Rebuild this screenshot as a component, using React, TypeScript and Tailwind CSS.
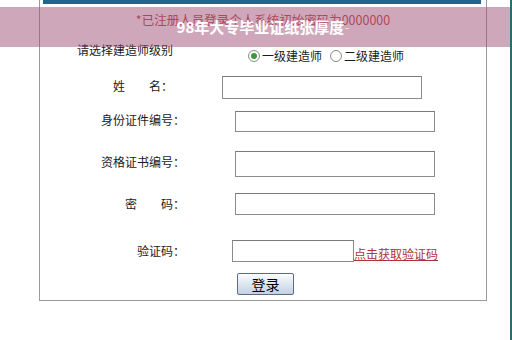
import React from "react";

const font = { fontFamily: '"Noto Sans CJK SC", "Noto Sans", sans-serif' };

function Radio({ checked }: { checked?: boolean }) {
  return (
    <span className="inline-flex items-center justify-center w-[12px] h-[12px] rounded-full border border-[#8a8a8a] bg-white mr-[2px]">
      {checked ? <span className="w-[6px] h-[6px] rounded-full bg-[#3c9a3c]" /> : null}
    </span>
  );
}

function Field({ w, h }: { w: number; h: number }) {
  return (
    <div
      className="border border-[#8c8c8c] border-t-[#7a7a7a] bg-white"
      style={{ width: w, height: h }}
    />
  );
}

export default function App() {
  return (
    <div
      className="relative w-[512px] h-[340px] bg-white overflow-hidden border-r-[2px] border-[#2c6b72] text-[#1a1a1a]"
      style={font}
    >
      <div className="ml-[39px] w-[448px] h-[301px] border-x border-b border-[#9a9a9a] flex flex-col">
        <div className="ml-[3px] mr-[5px] h-[4px] bg-[#1f6590]" />
        <div className="mt-[8px] h-[16px] flex items-center justify-center text-[12.5px] leading-[16px] text-[#c23a3a]">
          *已注册人员登录个人系统初始密码为0000000
        </div>
        <div className="mt-[14px] h-[20px] flex">
          <div className="ml-[37px] text-[12px] leading-[16px]">请选择建造师级别</div>
          <div className="ml-[75px] mt-[6px] h-[16px] flex items-center text-[12px] leading-[16px]">
            <Radio checked />
            <span>一级建造师</span>
            <span className="ml-[8px]" />
            <Radio />
            <span>二级建造师</span>
          </div>
        </div>
        <div className="mt-[14px] h-[23px] flex items-center">
          <div className="w-[133px] text-right text-[12px] leading-[16px] -mt-[4px]">姓　　名：</div>
          <div className="ml-[49px]">
            <Field w={200} h={23} />
          </div>
        </div>
        <div className="mt-[12px] h-[21px] flex items-center">
          <div className="w-[145px] text-right text-[12px] leading-[16px] -mt-[4px]">身份证件编号：</div>
          <div className="ml-[50px]">
            <Field w={200} h={21} />
          </div>
        </div>
        <div className="mt-[19px] h-[26px] flex items-center">
          <div className="w-[145px] text-right text-[12px] leading-[16px] -mt-[4px]">资格证书编号：</div>
          <div className="ml-[50px]">
            <Field w={200} h={26} />
          </div>
        </div>
        <div className="mt-[16px] h-[22px] flex items-center">
          <div className="w-[145px] text-right text-[12px] leading-[16px]">密　　码：</div>
          <div className="ml-[50px]">
            <Field w={200} h={22} />
          </div>
        </div>
        <div className="mt-[25px] h-[22px] flex items-center">
          <div className="w-[145px] text-right text-[12px] leading-[16px]">验证码：</div>
          <div className="ml-[47px]">
            <Field w={122} h={22} />
          </div>
          <span className="mt-[6px] text-[12px] leading-[16px] text-[#b0303c] underline">点击获取验证码</span>
        </div>
        <div className="mt-[11px] h-[22px] flex">
          <button
            className="ml-[197px] w-[57px] h-[22px] rounded-[2px] border border-[#5d6c82] bg-gradient-to-b from-[#fbfcfe] to-[#c4d0e2] text-[14px] leading-[18px] text-black"
            style={font}
          >
            登录
          </button>
        </div>
      </div>

      <div className="absolute left-0 right-0 top-[7px] h-[40px] bg-[rgba(160,80,120,0.5)] flex items-center justify-center">
        <span className="ml-[16px] -mt-[1px] text-[15px] leading-[18px] font-bold text-white">
          98年大专毕业证纸张厚度<span className="font-normal text-[#e8d6de]">-</span>
        </span>
      </div>
    </div>
  );
}
